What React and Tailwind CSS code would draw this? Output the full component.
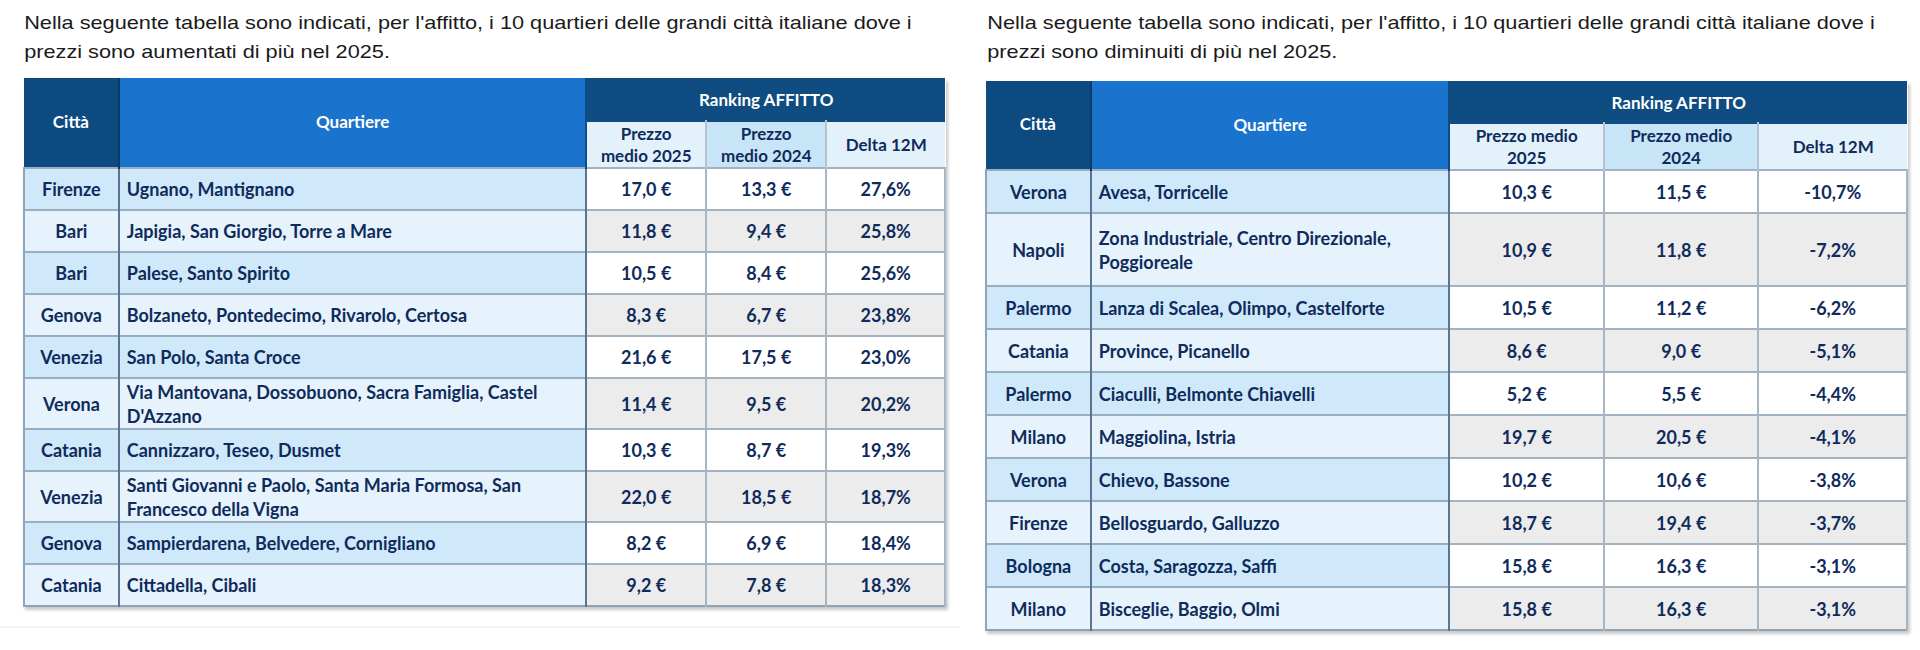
import React from "react";

const leftRows = [
  ["Firenze", ["Ugnano, Mantignano"], "17,0 €", "13,3 €", "27,6%"],
  ["Bari", ["Japigia, San Giorgio, Torre a Mare"], "11,8 €", "9,4 €", "25,8%"],
  ["Bari", ["Palese, Santo Spirito"], "10,5 €", "8,4 €", "25,6%"],
  ["Genova", ["Bolzaneto, Pontedecimo, Rivarolo, Certosa"], "8,3 €", "6,7 €", "23,8%"],
  ["Venezia", ["San Polo, Santa Croce"], "21,6 €", "17,5 €", "23,0%"],
  ["Verona", ["Via Mantovana, Dossobuono, Sacra Famiglia, Castel", "D'Azzano"], "11,4 €", "9,5 €", "20,2%"],
  ["Catania", ["Cannizzaro, Teseo, Dusmet"], "10,3 €", "8,7 €", "19,3%"],
  ["Venezia", ["Santi Giovanni e Paolo, Santa Maria Formosa, San", "Francesco della Vigna"], "22,0 €", "18,5 €", "18,7%"],
  ["Genova", ["Sampierdarena, Belvedere, Cornigliano"], "8,2 €", "6,9 €", "18,4%"],
  ["Catania", ["Cittadella, Cibali"], "9,2 €", "7,8 €", "18,3%"],
];

const rightRows = [
  ["Verona", ["Avesa, Torricelle"], "10,3 €", "11,5 €", "-10,7%"],
  ["Napoli", ["Zona Industriale, Centro Direzionale,", "Poggioreale"], "10,9 €", "11,8 €", "-7,2%"],
  ["Palermo", ["Lanza di Scalea, Olimpo, Castelforte"], "10,5 €", "11,2 €", "-6,2%"],
  ["Catania", ["Province, Picanello"], "8,6 €", "9,0 €", "-5,1%"],
  ["Palermo", ["Ciaculli, Belmonte Chiavelli"], "5,2 €", "5,5 €", "-4,4%"],
  ["Milano", ["Maggiolina, Istria"], "19,7 €", "20,5 €", "-4,1%"],
  ["Verona", ["Chievo, Bassone"], "10,2 €", "10,6 €", "-3,8%"],
  ["Firenze", ["Bellosguardo, Galluzzo"], "18,7 €", "19,4 €", "-3,7%"],
  ["Bologna", ["Costa, Saragozza, Saffi"], "15,8 €", "16,3 €", "-3,1%"],
  ["Milano", ["Bisceglie, Baggio, Olmi"], "15,8 €", "16,3 €", "-3,1%"],
];

const font = { fontFamily: "Lato, 'Open Sans', sans-serif" };

function Table({ rows, widths, bandH, subH, rowH, dblH, sub }) {
  return (
    <table
      className="table-fixed border-collapse shadow-[2px_3px_3px_rgba(0,0,0,0.22)] text-[#0f2b5b] font-bold text-[18px] leading-[24px]"
      style={font}
    >
      <colgroup>
        {widths.map((w, i) => (
          <col key={i} style={{ width: w }} />
        ))}
      </colgroup>
      <thead className="text-[17px]">
        <tr style={{ height: bandH }}>
          <th
            rowSpan={2}
            className="bg-[#0c4a80] text-white text-center align-middle pb-[2px] border-r-[2px] border-[#0a3a66]"
          >
            Città
          </th>
          <th
            rowSpan={2}
            className="bg-[#1a73cd] text-white text-center align-middle pb-[1px] border-r-[2px] border-[#0f4c81]"
          >
            Quartiere
          </th>
          <th colSpan={3} className="bg-[#0f4c81] text-white text-center align-middle pt-[2px]">
            Ranking AFFITTO
          </th>
        </tr>
        <tr style={{ height: subH }}>
          <th className="bg-[#e3f1fb] text-center align-middle border-r-[2px] border-[#b4c3d1] border-t-[2px] border-t-[#0f4c81] leading-[22px]">
            {sub[0]}
          </th>
          <th className="bg-[#c8e5f8] text-center align-middle border-r-[2px] border-[#b4c3d1] border-t-[2px] border-t-[#0f4c81] leading-[22px]">
            {sub[1]}
          </th>
          <th className="bg-[#e3f1fb] text-center align-middle border-t-[2px] border-t-[#0f4c81]">
            Delta 12M
          </th>
        </tr>
      </thead>
      <tbody>
        {rows.map((r, i) => {
          const odd = i % 2 === 0;
          const h = r[1].length > 1 ? dblH : rowH;
          const blue = odd ? "bg-[#cfe9fa]" : "bg-[#e6f3fc]";
          const num = odd ? "bg-white" : "bg-[#ececec]";
          return (
            <tr key={i} style={{ height: h }}>
              <td className={`${blue} text-center align-middle border-t-[2px] border-t-[#98aec3] border-l-[2px] border-l-[#8fa5ba] border-r-[2px] border-r-[#5b7591]`}>
                {r[0]}
              </td>
              <td className={`${blue} text-left align-middle pl-[7px] whitespace-nowrap border-t-[2px] border-t-[#98aec3] border-r-[2px] border-r-[#5b7591]`}>
                {r[1].map((l, j) => (
                  <div key={j}>{l}</div>
                ))}
              </td>
              <td className={`${num} text-center align-middle border-t-[2px] border-t-[#a3b2c1] border-r-[2px] border-r-[#a8b5c2]`}>
                {r[2]}
              </td>
              <td className={`${num} text-center align-middle border-t-[2px] border-t-[#a3b2c1] border-r-[2px] border-r-[#a8b5c2]`}>
                {r[3]}
              </td>
              <td className={`${num} text-center align-middle border-t-[2px] border-t-[#a3b2c1] border-r-[2px] border-r-[#a8b5c2]`}>
                {r[4]}
              </td>
            </tr>
          );
        })}
        <tr className="h-0">
          <td colSpan={5} className="p-0 border-t-[2px] border-t-[#8fa3b7]"></td>
        </tr>
      </tbody>
    </table>
  );
}

export default function App() {
  return (
    <div className="w-[1920px] h-[650px] bg-white relative overflow-hidden">
      <div className="flex flex-row gap-[39px] pl-[23px]">
        <div className="flex flex-col w-[923px]">
          <p
            className="pt-[8px] pl-[1px] text-[19px] leading-[29px] text-[#1a1a1a] whitespace-nowrap origin-left scale-x-[1.143]"
            style={{ fontFamily: "'Liberation Sans', Arial, sans-serif" }}
          >
            Nella seguente tabella sono indicati, per l'affitto, i 10 quartieri delle grandi città italiane dove i
            <br />
            prezzi sono aumentati di più nel 2025.
          </p>
          <div className="mt-[12px]">
            <Table
              rows={leftRows}
              widths={["95px", "468px", "120px", "121px", "119px"]}
              bandH="43px"
              subH="47px"
              rowH="42px"
              dblH="51px"
              sub={[
                <span key="a">Prezzo<br />medio 2025</span>,
                <span key="b">Prezzo<br />medio 2024</span>,
              ]}
            />
          </div>
          <div className="mt-[19px] h-[2px] bg-[#f2f2f2] -ml-[23px] w-[960px]"></div>
        </div>
        <div className="flex flex-col w-[923px]">
          <p
            className="pt-[8px] pl-[2px] text-[19px] leading-[29px] text-[#1a1a1a] whitespace-nowrap origin-left scale-x-[1.143]"
            style={{ fontFamily: "'Liberation Sans', Arial, sans-serif" }}
          >
            Nella seguente tabella sono indicati, per l'affitto, i 10 quartieri delle grandi città italiane dove i
            <br />
            prezzi sono diminuiti di più nel 2025.
          </p>
          <div className="mt-[15px]">
            <Table
              rows={rightRows}
              widths={["105px", "359px", "155px", "155px", "149px"]}
              bandH="42px"
              subH="47px"
              rowH="43px"
              dblH="73px"
              sub={[
                <span key="a">Prezzo medio<br />2025</span>,
                <span key="b">Prezzo medio<br />2024</span>,
              ]}
            />
          </div>
        </div>
      </div>
    </div>
  );
}
